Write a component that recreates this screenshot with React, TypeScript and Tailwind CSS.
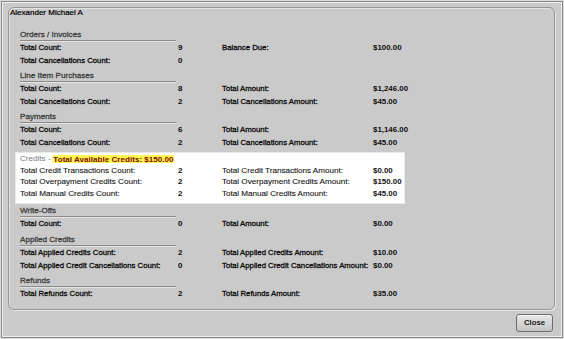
import React from "react";

type R = [string, string, string, string];

const font = "font-['Liberation_Sans',Arial,sans-serif]";

function Header({ title }: { title: string }) {
  return (
    <div className="h-[12px] w-[156px] border-b border-[#8a8a8a] shadow-[0_1px_0_#e4e4e4] text-[8.1px] leading-[11px] text-[#404040] [-webkit-text-stroke:0.3px_#404040]">
      {title}
    </div>
  );
}

function GrayRow({ r }: { r: R }) {
  return (
    <div className="flex h-[13px] items-center text-[#0d0d0d] leading-[10px]">
      <div className="w-[158px] text-[7.75px] [-webkit-text-stroke:0.3px_#0d0d0d] whitespace-nowrap">{r[0]}</div>
      <div className="w-[44px] text-[8px] font-bold">{r[1]}</div>
      <div className="w-[151px] text-[7.75px] [-webkit-text-stroke:0.3px_#0d0d0d] whitespace-nowrap">{r[2]}</div>
      <div className="text-[7.9px] font-bold whitespace-nowrap">{r[3]}</div>
    </div>
  );
}

function WhiteRow({ r }: { r: R }) {
  return (
    <div className="flex h-[11.5px] items-center text-[#111] leading-[10px]">
      <div className="w-[158px] text-[8.1px] [-webkit-text-stroke:0.1px_#111] whitespace-nowrap">{r[0]}</div>
      <div className="w-[44px] text-[8px] font-bold">{r[1]}</div>
      <div className="w-[151px] text-[8.1px] [-webkit-text-stroke:0.1px_#111] whitespace-nowrap">{r[2]}</div>
      <div className="text-[7.9px] font-bold whitespace-nowrap">{r[3]}</div>
    </div>
  );
}

function Section({ title, rows, cls }: { title: string; rows: R[]; cls: string }) {
  return (
    <div className={cls}>
      <Header title={title} />
      {rows.map((r, i) => (
        <GrayRow key={i} r={r} />
      ))}
    </div>
  );
}

export default function App() {
  return (
    <div className={`w-[564px] h-[339px] bg-[#dadada] p-[1px] ${font}`}>
      <div className="h-full border border-[#888888] bg-[#cacaca] shadow-[inset_1px_1px_0_#efefef,inset_-1px_-1px_0_#efefef] pl-[6px] pr-[7px] pt-[5px] flex flex-col">
        <div className="h-[303px] rounded-[6px] border border-[#969696] shadow-[inset_1px_1px_0_#e2e2e2,1px_1px_0_#e8e8e8] flex flex-col">
          <div className="ml-[1px] h-[10px] leading-[10px] text-[8px] text-black [-webkit-text-stroke:0.2px_#000] whitespace-nowrap">
            Alexander Michael A
          </div>
          <div className="pl-[11px] mt-[11px] flex flex-col">
            <Section
              cls=""
              title="Orders / Invoices"
              rows={[
                ["Total Count:", "9", "Balance Due:", "$100.00"],
                ["Total Cancellations Count:", "0", "", ""],
              ]}
            />
            <Section
              cls="mt-[3px]"
              title="Line Item Purchases"
              rows={[
                ["Total Count:", "8", "Total Amount:", "$1,246.00"],
                ["Total Cancellations Count:", "2", "Total Cancellations Amount:", "$45.00"],
              ]}
            />
            <Section
              cls="mt-[3px]"
              title="Payments"
              rows={[
                ["Total Count:", "6", "Total Amount:", "$1,146.00"],
                ["Total Cancellations Count:", "2", "Total Cancellations Amount:", "$45.00"],
              ]}
            />
            <div className="mt-[4px] -ml-[4px] w-[388px] bg-white pl-[4px] pb-[3.5px] shadow-[0_0_0_1px_#e8e8e8]">
              <div className="h-[12px] flex items-center text-[8.1px] whitespace-nowrap">
                <span className="text-[#7a7a7a]">Credits -&nbsp;</span>
                <span className="bg-[#fff650] text-[#7f0c0c] font-bold leading-[7px] py-[0.5px] px-[0.5px]">
                  Total Available Credits: $150.00
                </span>
              </div>
              <WhiteRow r={["Total Credit Transactions Count:", "2", "Total Credit Transactions Amount:", "$0.00"]} />
              <WhiteRow r={["Total Overpayment Credits Count:", "2", "Total Overpayment Credits Amount:", "$150.00"]} />
              <WhiteRow r={["Total Manual Credits Count:", "2", "Total Manual Credits Amount:", "$45.00"]} />
            </div>
            <Section
              cls="mt-[2px]"
              title="Write-Offs"
              rows={[["Total Count:", "0", "Total Amount:", "$0.00"]]}
            />
            <Section
              cls="mt-[4px]"
              title="Applied Credits"
              rows={[
                ["Total Applied Credits Count:", "2", "Total Applied Credits Amount:", "$10.00"],
                ["Total Applied Credit Cancellations Count:", "0", "Total Applied Credit Cancellations Amount:", "$0.00"],
              ]}
            />
            <Section
              cls="mt-[3px]"
              title="Refunds"
              rows={[["Total Refunds Count:", "2", "Total Refunds Amount:", "$35.00"]]}
            />
          </div>
        </div>
        <div className="flex justify-end pt-[4px] pr-[2px]">
          <button className="w-[37px] h-[18px] rounded-[3px] border border-[#6e6e6e] bg-gradient-to-b from-[#e8e8e8] to-[#c4c4c4] shadow-[inset_0_1px_0_#f6f6f6] text-[7.8px] font-bold text-[#1a1a1a] leading-none">
            Close
          </button>
        </div>
      </div>
    </div>
  );
}
